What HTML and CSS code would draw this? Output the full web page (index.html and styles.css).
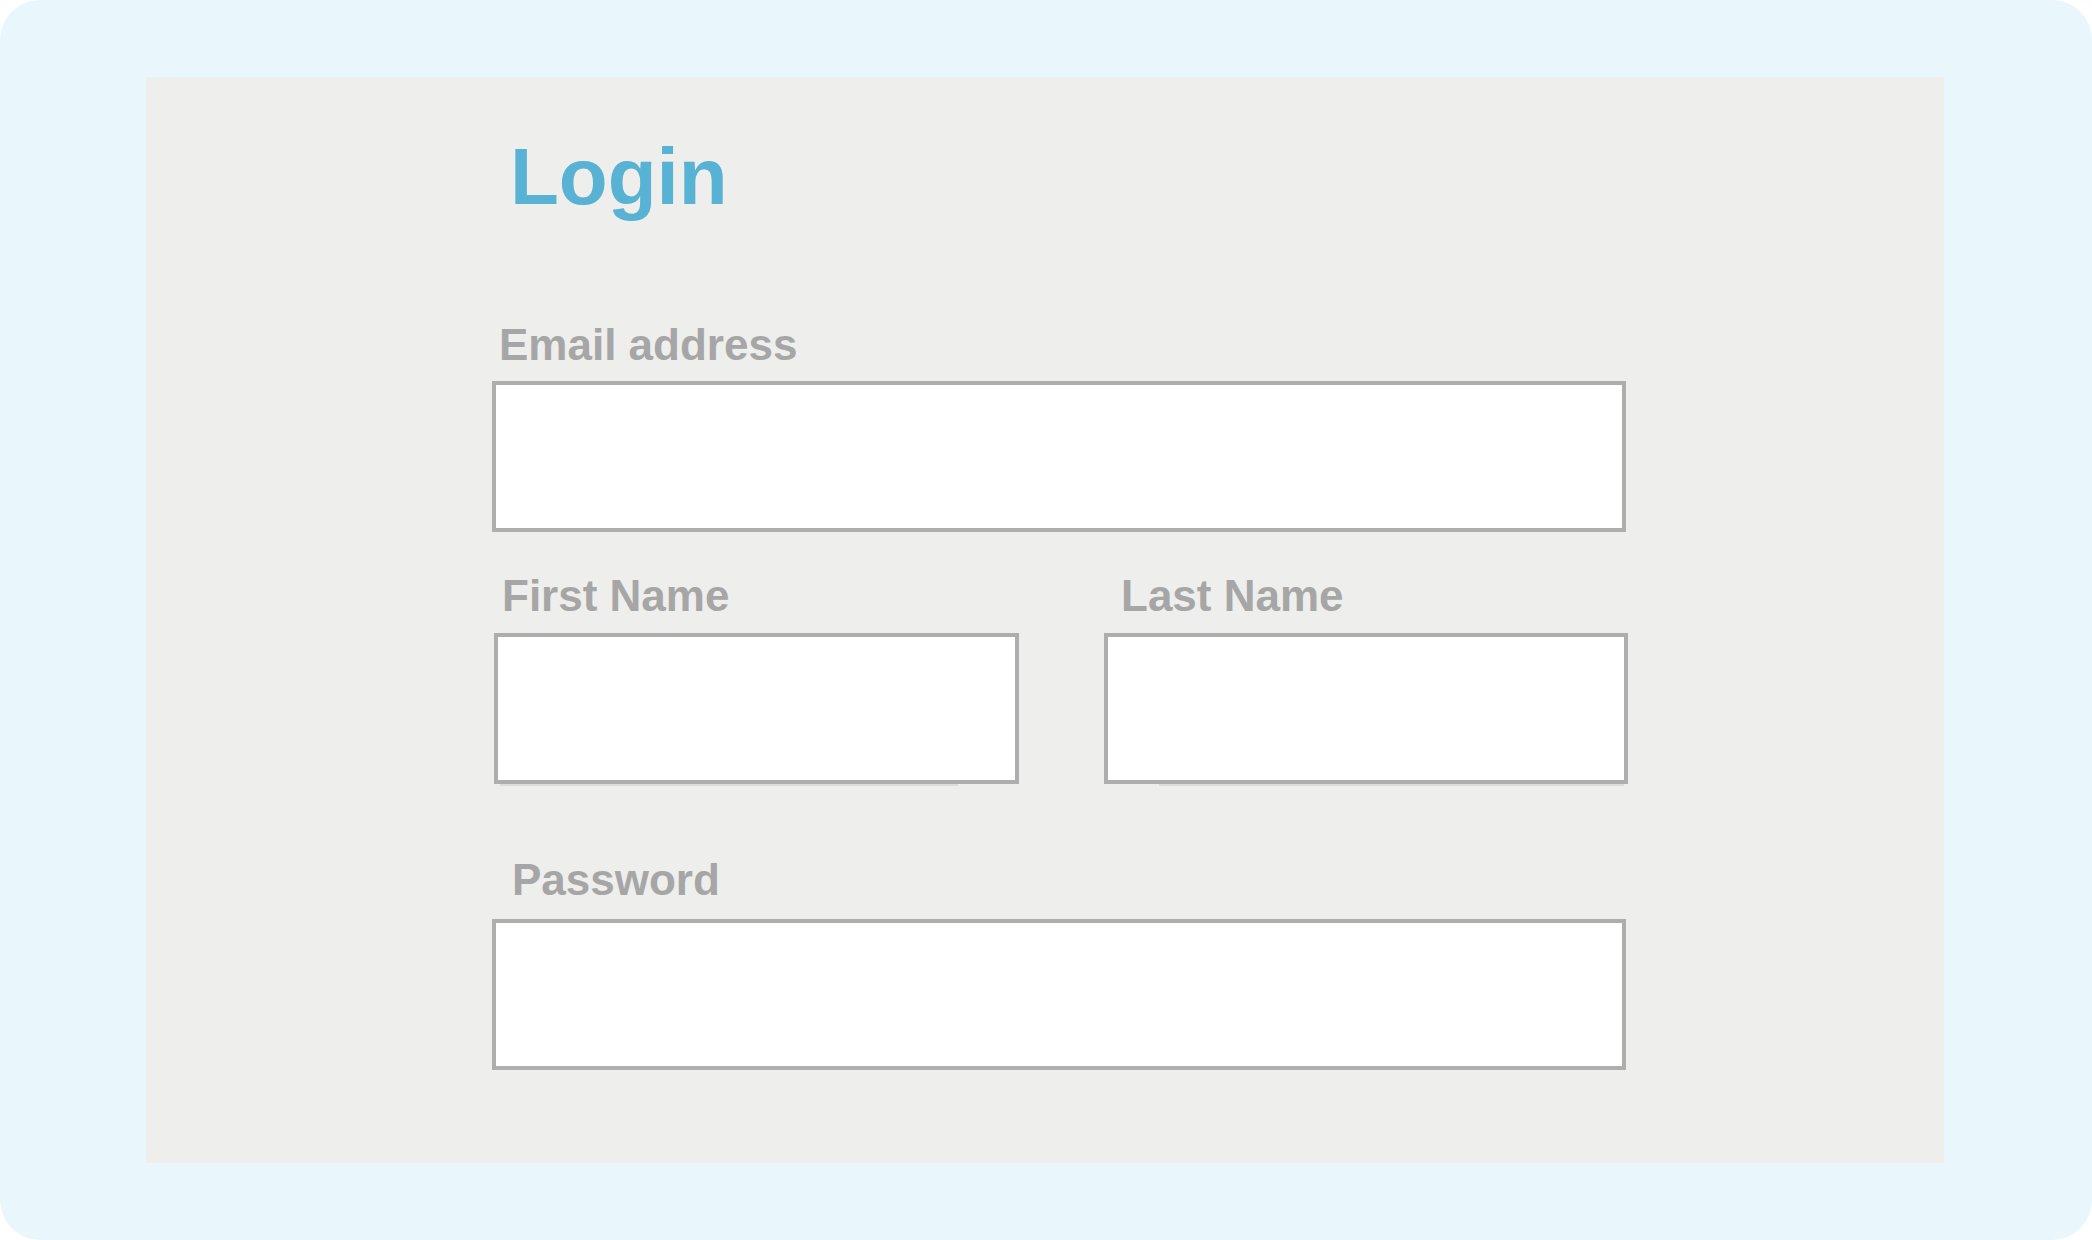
FILE: index.html
```html
<!DOCTYPE html>
<html lang="en">
<head>
    <meta charset="UTF-8">
    <meta name="viewport" content="width=device-width, initial-scale=1.0">
    <title>Login</title>
    <link rel="stylesheet" href="styles.css">
</head>
<body>
    <div class="frame">
        <div class="panel">
            <h1 class="title">Login</h1>
            <form class="login-form" action="/login" method="post">
                <div class="field field-email">
                    <label for="email" class="label-email">Email address</label>
                    <input type="email" id="email" name="email" class="input-wide">
                </div>

                <div class="name-row">
                    <div class="field field-name field-first">
                        <label for="first" class="label-first">First Name</label>
                        <input type="text" id="first" name="first">
                    </div>
                    <div class="field field-name field-last">
                        <label for="last" class="label-last">Last Name</label>
                        <input type="text" id="last" name="last">
                    </div>
                </div>

                <div class="field field-password">
                    <label for="password" class="label-password">Password</label>
                    <input type="password" id="password" name="password" class="input-wide">
                </div>
            </form>
        </div>
    </div>
</body>
</html>
```

FILE: styles.css
```css
body {
    font-family: "Liberation Sans", Arial, sans-serif;
    margin: 0;
    padding: 0;
    background-color: #fff;
}

.frame {
    width: 2092px;
    height: 1240px;
    box-sizing: border-box;
    padding: 77px 148px 77px 146px;
    background-color: #e9f7fd;
    border-radius: 40px;
}

.panel {
    height: 100%;
    box-sizing: border-box;
    padding: 60px 0 0 346px;
    background-color: #eeeeec;
}

.title {
    margin: 0 0 0 18px;
    font-size: 80px;
    line-height: 80px;
    font-weight: bold;
    color: #58b2d4;
}

.login-form {
    width: 1136px;
}

label {
    display: block;
    font-size: 44px;
    line-height: 44px;
    font-weight: bold;
    color: #a6a6a6;
}

input {
    display: block;
    box-sizing: border-box;
    height: 151px;
    margin: 0;
    padding: 0 12px;
    border: 4px solid #aeaeae;
    border-radius: 0;
    background-color: #fff;
    outline: none;
}

.input-wide {
    width: 1134px;
}

.field-email {
    margin-top: 106px;
}

.label-email {
    margin: 0 0 14px 7px;
}

.name-row {
    display: flex;
    gap: 85px;
    margin-top: 42px;
    padding-left: 2px;
}

.field-name {
    position: relative;
}

.field-name input {
    width: 100%;
}

/* faint line under the name boxes */
.field-name::after {
    content: "";
    position: absolute;
    bottom: -2px;
    height: 2px;
    background-color: #dcdcdb;
}

.field-first {
    width: 525px;
}

.field-first::after {
    left: 6px;
    right: 61px;
}

.field-last {
    width: 524px;
}

.field-last::after {
    left: 55px;
    right: 4px;
}

.label-first {
    margin: 0 0 15px 8px;
}

.label-last {
    margin: 0 0 15px 17px;
}

.field-password {
    margin-top: 74px;
}

.label-password {
    margin: 0 0 17px 20px;
}
```
